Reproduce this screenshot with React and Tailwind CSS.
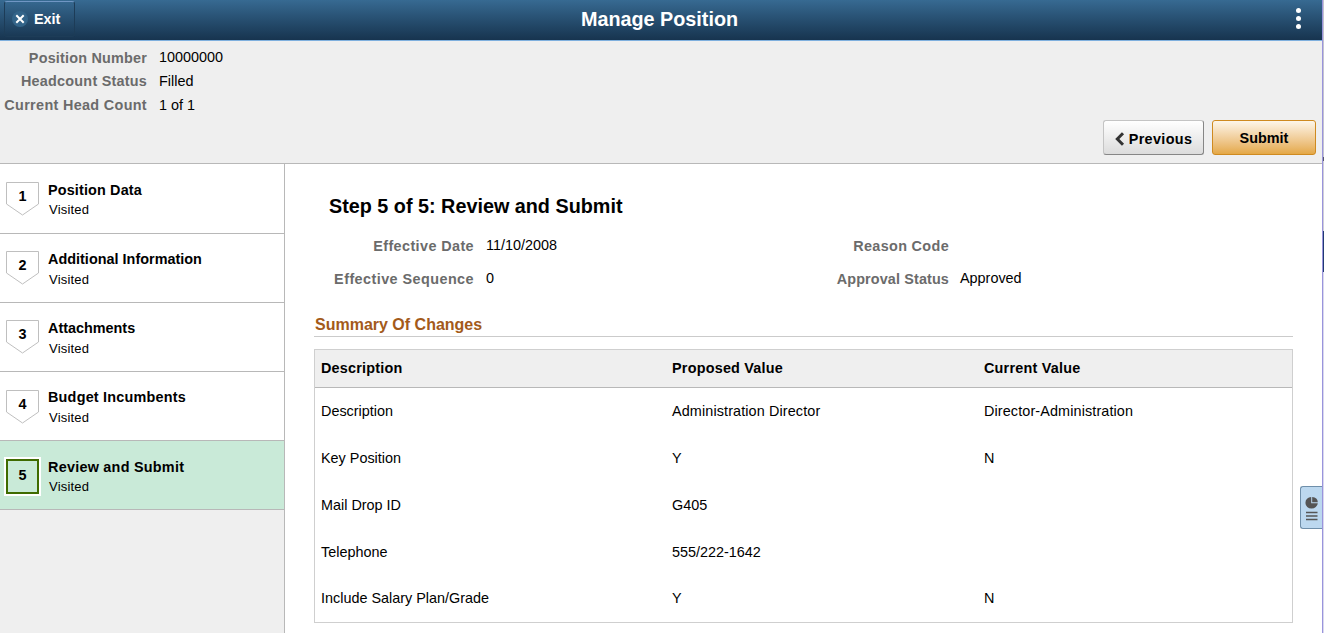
import React from 'react';

const positionInfo = [
    { label: 'Position Number', value: '10000000', track: 'tracking-[0.2px] pt-px', row: 'h-6' },
    { label: 'Headcount Status', value: 'Filled', track: 'tracking-[0.23px]', row: 'h-[23px]' },
    { label: 'Current Head Count', value: '1 of 1', track: 'tracking-[0.33px]', row: 'h-[25px]' }
];

const steps = [
    { id: 1, name: 'Position Data', height: 'h-[70px]', gap: 'pt-[17px]', badge: 'pt-[18px]', track: 'tracking-[0.15px]', status: 'mt-px' },
    { id: 2, name: 'Additional Information', height: 'h-[69px]', gap: 'pt-4', badge: 'pt-[17px]', track: 'tracking-[0.02px]', status: 'mt-0.5' },
    { id: 3, name: 'Attachments', height: 'h-[69px]', gap: 'pt-4', badge: 'pt-[17px]', track: 'tracking-normal', status: 'mt-0.5' },
    { id: 4, name: 'Budget Incumbents', height: 'h-[69px]', gap: 'pt-4', badge: 'pt-[18px]', track: 'tracking-[0.22px]', status: 'mt-0.5' },
    { id: 5, name: 'Review and Submit', height: 'h-[69px]', gap: 'pt-[17px]', badge: 'pt-4', track: 'tracking-[0.25px]', status: 'mt-px', active: true }
];

const changes = [
    { description: 'Description', proposed: 'Administration Director', current: 'Director-Administration' },
    { description: 'Key Position', proposed: 'Y', current: 'N' },
    { description: 'Mail Drop ID', proposed: 'G405', current: '' },
    { description: 'Telephone', proposed: '555/222-1642', current: '' },
    { description: 'Include Salary Plan/Grade', proposed: 'Y', current: 'N' }
];

const StepBadge = ({ step }) => {
    if (step.active) {
        return (
            <div className="ml-1 w-[37px] h-[39px] bg-white p-[2px]">
                <div className="w-[33px] h-[35px] bg-[#c9ead8] border-2 border-[#3f6b00] text-center text-[14.4px] font-bold leading-7">
                    {step.id}
                </div>
            </div>
        );
    }
    return (
        <div className="relative ml-1.5 w-[33px] h-[34px] text-center text-[14.4px] font-bold leading-7">
            <svg className="absolute inset-0" width="33" height="34" viewBox="0 0 33 34" fill="none">
                <path d="M0.5 0.5H32.5V22L16.5 33L0.5 22Z" stroke="#bfbfbf" />
            </svg>
            <span className="relative">{step.id}</span>
        </div>
    );
};

const Field = ({ label, value, track, gap = 'ml-3' }) => (
    <div className="flex h-[33px] items-center">
        <span className={`w-[160px] text-right font-bold text-[#6b6b6b] pt-0.5 ${track}`}>{label}</span>
        <span className={gap}>{value}</span>
    </div>
);

const Header = () => (
    <header className="h-[41px] shrink-0 flex items-start justify-between border-b border-[#7fb0de] bg-linear-to-b from-[#376a92] to-[#17344f] text-white">
        <div className="w-[120px]">
            <button className="mt-px ml-1 w-[71px] h-9 flex items-center rounded-[3px] border border-[#1d3c57] border-t-[#7096c4] pl-[7px] font-bold text-[14.4px]">
                <span className="flex size-4 items-center justify-center rounded-full bg-[#336489]">
                    <svg width="10" height="10" viewBox="0 0 10 10" fill="none">
                        <path d="M1.3 1.3L8.7 8.7M8.7 1.3L1.3 8.7" stroke="white" strokeWidth="2" />
                    </svg>
                </span>
                <span className="ml-1.5">Exit</span>
            </button>
        </div>
        <h1 className="text-[19.8px] font-bold leading-[38px] ml-[-3px]">Manage Position</h1>
        <div className="w-[120px] flex justify-end">
            <button className="w-[47px] flex flex-col items-center gap-[3px] pt-[8px]">
                <span className="size-[5px] rounded-full bg-white" />
                <span className="size-[5px] rounded-full bg-white" />
                <span className="size-[5px] rounded-full bg-white" />
            </button>
        </div>
    </header>
);

const Summary = () => (
    <div className="h-[123px] shrink-0 flex justify-between bg-[#efefef] border-b border-[#b8b8b8]">
        <div className="pt-1">
            {positionInfo.map((item) => (
                <div key={item.label} className={`flex items-center ${item.row}`}>
                    <span className={`w-[147px] whitespace-nowrap text-right font-bold text-[#6b6b6b] ${item.track}`}>{item.label}</span>
                    <span className="ml-3">{item.value}</span>
                </div>
            ))}
        </div>
        <div className="flex gap-2 items-end pb-2 pr-1.5">
            <button className="w-[101px] h-[35px] flex items-center justify-center rounded-[3px] border border-[#c4c4c4] border-r-[#868686] border-b-[#868686] bg-linear-to-b from-white to-[#dcdcdc] font-bold tracking-[0.35px]">
                <svg className="mr-1 mt-0.5" width="10" height="14" viewBox="0 0 10 14" fill="none">
                    <path d="M8 1.2L2.3 7L8 12.8" stroke="#333" strokeWidth="3" />
                </svg>
                <span className="pt-0.5">Previous</span>
            </button>
            <button className="w-[104px] h-[35px] rounded-[3px] border border-[#cf8a20] bg-linear-to-b from-[#fdf6ea] to-[#e4a845] font-bold">
                Submit
            </button>
        </div>
    </div>
);

const Sidebar = () => (
    <nav className="w-[285px] shrink-0 bg-[#efefef] border-r border-[#b8b8b8]">
        {steps.map((step) => (
            <div key={step.id} className={`flex items-start border-b border-[#b8b8b8] ${step.height} ${step.active ? 'bg-[#c9ead8]' : 'bg-white'}`}>
                <div className={`w-12 shrink-0 ${step.badge}`}>
                    <StepBadge step={step} />
                </div>
                <div className={step.gap}>
                    <div className={`font-bold leading-[18px] ${step.track}`}>{step.name}</div>
                    <div className={`ml-px text-[13px] leading-[20px] tracking-[0.2px] ${step.status}`}>Visited</div>
                </div>
            </div>
        ))}
    </nav>
);

const ChangesTable = () => (
    <div className="mt-3 w-[979px] h-[274px] border border-[#cfcfcf]">
        <div className="grid grid-cols-[351px_312px_1fr] h-[38px] items-center border-b border-[#b8b8b8] bg-[#efefef] pl-1.5 pb-px font-bold tracking-[0.22px]">
            <span>Description</span>
            <span>Proposed Value</span>
            <span>Current Value</span>
        </div>
        {changes.map((row) => (
            <div key={row.description} className="grid grid-cols-[351px_312px_1fr] h-[46.75px] items-center pl-1.5">
                <span>{row.description}</span>
                <span className={row.proposed.length > 12 ? 'tracking-[0.12px]' : ''}>{row.proposed}</span>
                <span className="tracking-[0.12px]">{row.current}</span>
            </div>
        ))}
    </div>
);

const App = () => (
    <div className="relative flex h-[633px] w-[1324px] overflow-hidden bg-white font-['Liberation_Sans',Arial,sans-serif] text-[14.4px] leading-[18px] text-black">
        <div className="flex w-[1322px] shrink-0 flex-col">
            <Header />
            <Summary />
            <div className="flex flex-1 min-h-0">
                <Sidebar />
                <main className="flex-1 pl-[29px]">
                    <h2 className="ml-[15px] mt-[29px] text-[19.8px] font-bold leading-[26px]">Step 5 of 5: Review and Submit</h2>
                    <div className="mt-[9px] flex">
                        <div className="w-[475px]">
                            <Field label="Effective Date" value="11/10/2008" track="tracking-[0.4px]" />
                            <Field label="Effective Sequence" value="0" track="tracking-[0.44px]" />
                        </div>
                        <div>
                            <Field label="Reason Code" value="" track="tracking-[0.35px]" />
                            <Field label="Approval Status" value="Approved" track="tracking-[0.13px]" gap="ml-[11px]" />
                        </div>
                    </div>
                    <h3 className="mt-[18px] w-[979px] h-[25px] border-b border-[#cbcbcb] pl-px text-base font-bold leading-[26px] text-[#a35a1a]">Summary Of Changes</h3>
                    <ChangesTable />
                </main>
            </div>
        </div>
        {/* Window edge */}
        <div className="w-px bg-[#9a94dc]" />
        <div className="flex w-px flex-col bg-[#d9d9ee]">
            <div className="h-[157px] bg-[#c4c4d0]" />
            <div className="h-1 bg-[#55556a]" />
            <div className="h-[70px] bg-[#cfcfd8]" />
            <div className="h-[41px] bg-[#1f3a72]" />
        </div>
        {/* Related information tab */}
        <button className="absolute left-[1300px] top-[486px] w-[22px] h-[43px] rounded-l-[3px] border border-r-0 border-[#6f8faa] bg-[#bcd8ef]">
            <svg className="absolute left-1 top-[9px]" width="14" height="25" viewBox="0 0 14 25">
                <path d="M6.2 1V7.2H12.8A6.2 5.8 0 1 1 6.2 1Z" fill="#555" />
                <path d="M7.2 1A6 5.5 0 0 1 12.8 6.2H7.2Z" fill="#555" />
                <path d="M1 16.5H12.5M1 20H12.5M1 23.5H12.5" stroke="#555" strokeWidth="1.5" />
            </svg>
        </button>
    </div>
);

export default App;
